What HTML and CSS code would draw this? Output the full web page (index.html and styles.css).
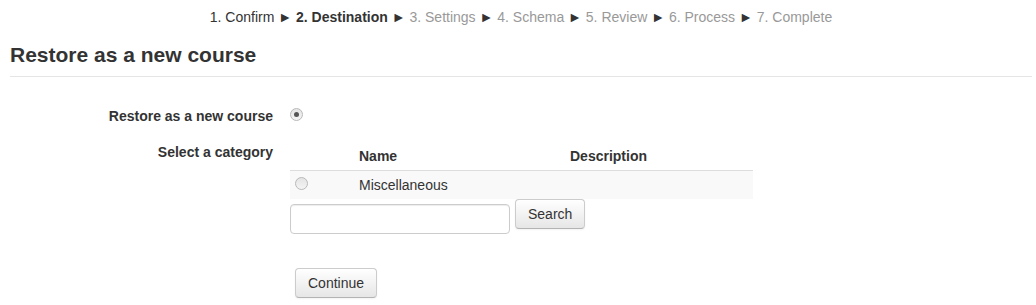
FILE: index.html
```html
<!DOCTYPE html>
<html lang="en">
<head>
  <meta charset="UTF-8" />
  <title>Restore course</title>
  <link rel="stylesheet" href="styles.css">
</head>
<body>

<div class="page">
  <div class="stepper">
    <span class="done">1. Confirm</span> <span class="sep">&#9658;</span>
    <span class="current">2. Destination</span> <span class="sep">&#9658;</span>
    <span class="todo">3. Settings</span> <span class="sep">&#9658;</span>
    <span class="todo">4. Schema</span> <span class="sep">&#9658;</span>
    <span class="todo">5. Review</span> <span class="sep">&#9658;</span>
    <span class="todo">6. Process</span> <span class="sep">&#9658;</span>
    <span class="todo">7. Complete</span>
  </div>

  <h2 class="section-title">Restore as a new course</h2>

  <form class="restore-form">
    <div class="form-row first">
      <label class="form-label" for="newcourse">Restore as a new course</label>
      <div class="form-control">
        <input type="radio" class="radio" id="newcourse" name="target" checked>
      </div>
    </div>

    <div class="form-row">
      <div class="form-label">Select a category</div>
      <div class="form-control">
        <table class="cat-table">
          <thead>
            <tr>
              <th class="col-pick"></th>
              <th class="col-name">Name</th>
              <th class="col-desc">Description</th>
            </tr>
          </thead>
          <tbody>
            <tr>
              <td class="col-pick"><input type="radio" class="radio" name="category"></td>
              <td class="col-name">Miscellaneous</td>
              <td class="col-desc"></td>
            </tr>
          </tbody>
        </table>
        <div class="search-line">
          <input type="text" class="search-input">
          <button type="button" class="btn">Search</button>
        </div>
      </div>
    </div>

    <div class="form-row actions">
      <div class="form-label"></div>
      <div class="form-control">
        <button type="button" class="btn btn-continue">Continue</button>
      </div>
    </div>
  </form>
</div>

</body>
</html>
```

FILE: styles.css
```css
body {
  margin: 0;
  font-family: "Liberation Sans", Arial, sans-serif;
  font-size: 14px;
  line-height: 20px;
  color: #333;
  background: #fff;
}

.page {
  margin: 0 4px 0 10px;
}

/* steps */
.stepper {
  padding-top: 7px;
  text-align: center;
  white-space: nowrap;
}

.stepper .current {
  font-weight: bold;
}

.stepper .todo {
  color: #999;
}

.stepper .sep {
  font-size: 14px;
  color: #333;
}

.section-title {
  margin: 16px 0 0;
  padding-bottom: 9px;
  font-size: 21px;
  line-height: 24px;
  font-weight: bold;
  border-bottom: 1px solid #e5e5e5;
}

/* form */
.restore-form {
  margin-top: 29px;
}

.form-row {
  display: grid;
  grid-template-columns: 263px 1fr;
  column-gap: 17px;
  margin-bottom: 16px;
}

.form-label {
  text-align: right;
  font-weight: bold;
}

.form-control {
  display: flex;
  flex-direction: column;
  align-items: flex-start;
}

.radio {
  appearance: none;
  -webkit-appearance: none;
  width: 13px;
  height: 13px;
  margin: 0;
  border-radius: 50%;
  border: 1px solid #b9b9b9;
  background: linear-gradient(#e4e4e4, #f4f4f4);
  box-sizing: border-box;
  position: relative;
}

.radio:checked::after {
  content: "";
  position: absolute;
  top: 3px;
  left: 3px;
  width: 5px;
  height: 5px;
  border-radius: 50%;
  background: #555;
}

.form-row.first .radio {
  margin-top: 2px;
}

.cat-table {
  border-collapse: collapse;
  width: 463px;
}

.cat-table th,
.cat-table td {
  padding: 4px 5px;
  text-align: left;
  vertical-align: top;
}

.cat-table th {
  font-weight: bold;
}

.cat-table tbody tr {
  background: #f9f9f9;
  border-top: 1px solid #ddd;
}

.cat-table .col-pick { width: 54px; }
.cat-table .col-name { width: 201px; }

.cat-table td .radio {
  margin-top: 2px;
}

.search-line {
  display: flex;
  align-items: flex-start;
  gap: 5px;
}

.search-input {
  width: 220px;
  height: 30px;
  margin-top: 5px;
  box-sizing: border-box;
  padding: 4px 6px;
  border: 1px solid #ccc;
  border-radius: 4px;
  box-shadow: inset 0 1px 1px rgba(0,0,0,0.075);
  font: inherit;
}

.btn {
  font: inherit;
  color: #333;
  padding: 4px 12px;
  height: 30px;
  box-sizing: border-box;
  border: 1px solid #ccc;
  border-bottom-color: #b3b3b3;
  border-radius: 4px;
  background: linear-gradient(#fff, #e6e6e6);
  box-shadow: inset 0 1px 0 rgba(255,255,255,0.2), 0 1px 2px rgba(0,0,0,0.05);
  cursor: pointer;
}

.form-row.actions {
  margin-top: 34px;
}

.btn-continue {
  margin-left: 5px;
}
```
